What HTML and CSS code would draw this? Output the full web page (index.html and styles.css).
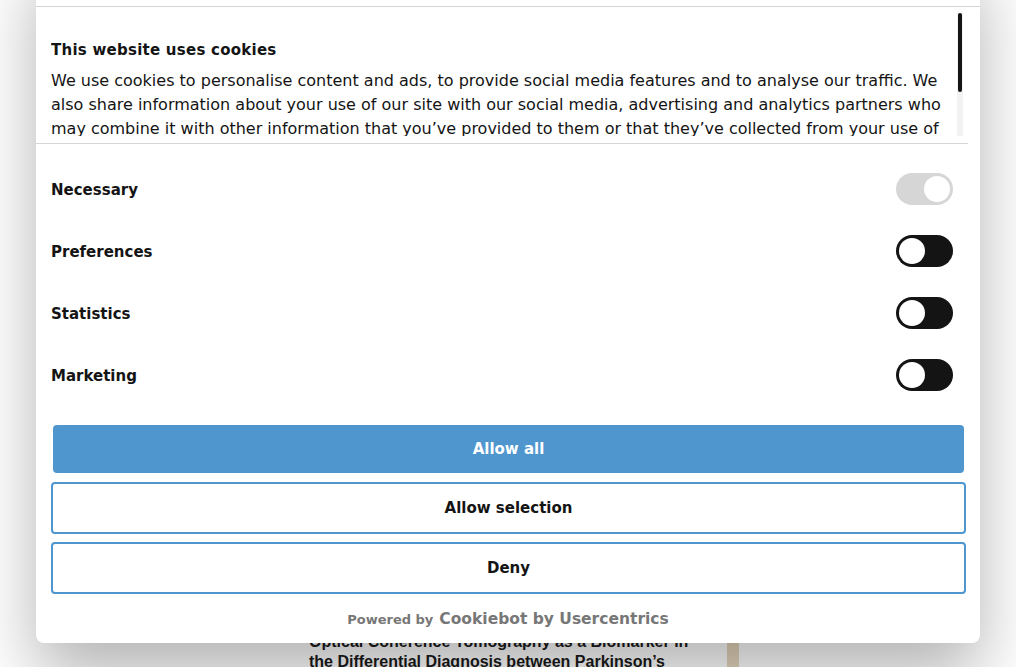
FILE: index.html
```html
<!DOCTYPE html>
<html lang="en">
<head>
<meta charset="utf-8">
<title>Cookie consent</title>
<link rel="stylesheet" href="styles.css">
</head>
<body>
<main class="page">
  <div class="article">
    <h2 class="article-title">Optical Coherence Tomography as a Biomarker in the Differential Diagnosis between Parkinson’s</h2>
    <div class="article-image"></div>
  </div>
</main>

<div class="dialog" role="dialog" aria-label="Cookie consent">
  <div class="dialog-header"></div>
  <div class="details">
    <div class="scroll">
      <h2 class="title">This website uses cookies</h2>
      <p class="text">We use cookies to personalise content and ads, to provide social media features and to analyse our traffic. We also share information about your use of our site with our social media, advertising and analytics partners who may combine it with other information that you’ve provided to them or that they’ve collected from your use of their services.</p>
    </div>
    <div class="scrollbar"><div class="scrollbar-thumb"></div></div>
  </div>
  <div class="levels">
    <div class="level">
      <span class="level-label">Necessary</span>
      <span class="toggle toggle-disabled"><span class="knob"></span></span>
    </div>
    <div class="level">
      <span class="level-label">Preferences</span>
      <span class="toggle"><span class="knob"></span></span>
    </div>
    <div class="level">
      <span class="level-label">Statistics</span>
      <span class="toggle"><span class="knob"></span></span>
    </div>
    <div class="level">
      <span class="level-label">Marketing</span>
      <span class="toggle"><span class="knob"></span></span>
    </div>
  </div>
  <div class="buttons">
    <button class="btn btn-primary">Allow all</button>
    <button class="btn btn-outline">Allow selection</button>
    <button class="btn btn-outline">Deny</button>
  </div>
  <div class="footer">
    <span class="powered">Powered by</span>
    <span class="brand">Cookiebot by Usercentrics</span>
  </div>
</div>
</body>
</html>
```

FILE: styles.css
```css
* { box-sizing: border-box; }

html, body {
  margin: 0;
  padding: 0;
  width: 1016px;
  height: 667px;
  overflow: hidden;
  background: #ffffff;
}

body {
  font-family: "DejaVu Sans", sans-serif;
  color: #141414;
  position: relative;
}

.page {
  height: 667px;
  overflow: hidden;
  padding-top: 632px;
}

.article {
  display: flex;
  gap: 38px;
  padding-left: 309px;
}

.article-title {
  margin: 0;
  width: 380px;
  font-family: "Liberation Sans", Arial, sans-serif;
  font-size: 16px;
  line-height: 20px;
  font-weight: 700;
  color: #1a1a1a;
}

.article-image {
  width: 12px;
  height: 40px;
  margin-top: 4px;
  background: #e6d6bd;
}

.dialog {
  position: absolute;
  left: 36px;
  top: -50px;
  width: 944px;
  background: #ffffff;
  border-radius: 8px;
  box-shadow: 0 32px 68px rgba(0, 0, 0, 0.3);
  display: flex;
  flex-direction: column;
}

.dialog-header {
  height: 57px;
  border-bottom: 1px solid #d6d6d6;
}

.details {
  position: relative;
  margin-right: 12px;
  padding: 6px 11px 7px 15px;
  border-bottom: 1px solid #d6d6d6;
}

.scroll {
  height: 123px;
  overflow: hidden;
  padding: 25px 0 0 0;
}

.scrollbar {
  position: absolute;
  top: 6px;
  right: 5px;
  width: 6px;
  height: 123px;
  background: #f2f2f2;
  display: flex;
  justify-content: center;
}

.scrollbar-thumb {
  width: 4px;
  height: 79px;
  background: #141414;
  border-radius: 2px;
}

.title {
  margin: 0 0 7px;
  font-size: 15px;
  line-height: 24px;
  font-weight: 700;
  letter-spacing: 0.25px;
}

.text {
  margin: 0;
  font-size: 16px;
  line-height: 24px;
  padding-right: 8px;
}

.levels {
  padding: 14px 27px 0 15px;
  display: flex;
  flex-direction: column;
}

.level {
  height: 62px;
  display: flex;
  align-items: center;
  justify-content: space-between;
}

.level-label {
  font-size: 15px;
  font-weight: 700;
  padding-top: 1px;
}

.toggle {
  width: 57px;
  height: 32px;
  border-radius: 16px;
  background: #141414;
  padding: 3px;
  display: flex;
  justify-content: flex-start;
}

.toggle-disabled {
  background: #d6d6d6;
  justify-content: flex-end;
}

.knob {
  width: 26px;
  height: 26px;
  border-radius: 50%;
  background: #ffffff;
}

.buttons {
  padding: 19px 14px 0 15px;
  display: flex;
  flex-direction: column;
}

.btn {
  font-family: "DejaVu Sans", sans-serif;
  font-size: 15px;
  font-weight: 700;
  border-radius: 4px;
  cursor: pointer;
}

.btn-primary {
  height: 48px;
  margin: 0 2px 9px;
  border: none;
  background: #4f96cf;
  color: #ffffff;
}

.btn-outline {
  height: 52px;
  border: 2px solid #4f96cf;
  background: #ffffff;
  color: #141414;
  margin-bottom: 8px;
}

.btn-outline:last-child {
  margin-bottom: 0;
}

.footer {
  height: 49px;
  display: flex;
  align-items: center;
  justify-content: center;
  gap: 6px;
  color: #777777;
  font-weight: 700;
}

.powered {
  font-size: 13px;
  padding-top: 2px;
}

.brand {
  font-size: 15.5px;
}
```
